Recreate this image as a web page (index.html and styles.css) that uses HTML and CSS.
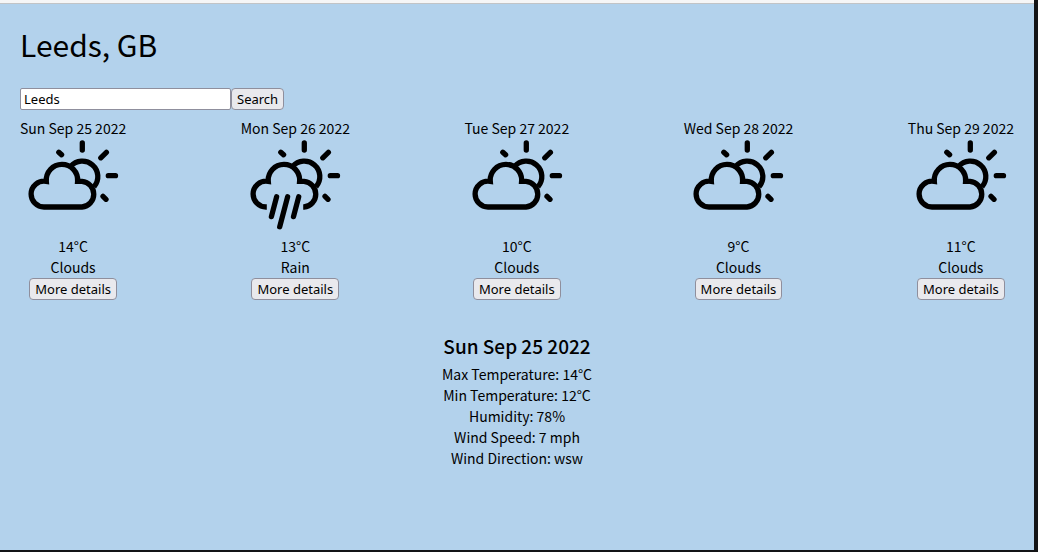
FILE: index.html
```html
<!DOCTYPE html>
<html lang="en">
<head>
<meta charset="utf-8">
<meta name="viewport" content="width=device-width, initial-scale=1">
<title>Weather forecast</title>
<link rel="stylesheet" href="styles.css">
</head>
<body>
<svg class="symbols" aria-hidden="true">
  <g id="sun">
    <path class="line" d="M42.6 25.4A15.5 15.5 0 0 1 66 45.8"/>
    <path class="line round" d="M54.3 1.9V9M72.8 16.8L78.4 11.4M80.3 34.7H87.5M75 55.4L78 58.3M30.8 11.2L33.6 13.8"/>
  </g>
  <symbol id="clouds" class="symbol" viewBox="0 0 90 90">
    <use href="#sun"/>
    <path class="line" d="M16 66H54A12.9 12.9 0 0 0 54 40.3H49.6A15.7 15.7 0 1 0 18.3 40.4A12.9 12.9 0 0 0 3.1 53.1A12.9 12.9 0 0 0 16 66Z"/>
  </symbol>
  <symbol id="rain" class="symbol" viewBox="0 0 90 90">
    <use href="#sun"/>
    <path class="line" d="M16.8 66H16A12.9 12.9 0 0 1 3.1 53.1A12.9 12.9 0 0 1 18.3 40.4A15.7 15.7 0 1 1 49.6 40.3H54A12.9 12.9 0 0 1 54 66H53.2"/>
    <path class="line round" d="M26.6 55.8L21.4 75.6M37.6 55.8L29.7 85.8M48.7 55.8L43.5 75.6"/>
  </symbol>
</svg>
<main class="page">
  <h1 class="city">Leeds, GB</h1>
  <form class="search">
    <input class="search-input" type="text" value="Leeds" aria-label="City">
    <button class="button" type="button">Search</button>
  </form>
  <section class="forecast">
    <article class="day">
      <div>Sun Sep 25 2022</div>
      <svg class="icon" role="img" aria-label="Clouds"><use href="#clouds"/></svg>
      <div>14°C</div>
      <div>Clouds</div>
      <button class="button" type="button">More details</button>
    </article>
    <article class="day">
      <div>Mon Sep 26 2022</div>
      <svg class="icon" role="img" aria-label="Rain"><use href="#rain"/></svg>
      <div>13°C</div>
      <div>Rain</div>
      <button class="button" type="button">More details</button>
    </article>
    <article class="day">
      <div>Tue Sep 27 2022</div>
      <svg class="icon" role="img" aria-label="Clouds"><use href="#clouds"/></svg>
      <div>10°C</div>
      <div>Clouds</div>
      <button class="button" type="button">More details</button>
    </article>
    <article class="day">
      <div>Wed Sep 28 2022</div>
      <svg class="icon" role="img" aria-label="Clouds"><use href="#clouds"/></svg>
      <div>9°C</div>
      <div>Clouds</div>
      <button class="button" type="button">More details</button>
    </article>
    <article class="day">
      <div>Thu Sep 29 2022</div>
      <svg class="icon" role="img" aria-label="Clouds"><use href="#clouds"/></svg>
      <div>11°C</div>
      <div>Clouds</div>
      <button class="button" type="button">More details</button>
    </article>
  </section>
  <section class="details">
    <h2 class="details-title">Sun Sep 25 2022</h2>
    <div>Max Temperature: 14°C</div>
    <div>Min Temperature: 12°C</div>
    <div>Humidity: 78%</div>
    <div>Wind Speed: 7 mph</div>
    <div>Wind Direction: wsw</div>
  </section>
</main>
</body>
</html>
```
FILE: styles.css
```css
* { box-sizing: border-box; }

html {
  padding: 0 4px 2px 0;
  background: #131416;
}

body {
  margin: 0;
  min-height: calc(100vh - 2px);
  display: flex;
  flex-direction: column;
  background: #b3d2ec;
  border-top: 3px solid #f6f6f6;
  color: #000;
  font-family: "Noto Sans CJK SC", "Noto Sans", sans-serif;
  font-size: 14px;
  line-height: 21px;
}

.symbols { position: absolute; width: 0; height: 0; }

.symbol { overflow: visible; }

.line {
  fill: none;
  stroke: #000;
  stroke-width: 5.3;
}

.round { stroke-linecap: round; }

.page {
  flex: 1;
  padding: 18px 20px 20px;
  border-top: 1px solid #c2c4c6;
}

.city {
  margin: 0 0 22px;
  font-size: 30px;
  font-weight: 400;
  line-height: 44px;
}

.search { display: flex; }

.search-input,
.button {
  height: 22px;
  border: 1px solid #8f8f9d;
  color: #000;
  font-family: "Noto Sans", sans-serif;
  font-size: 13px;
  line-height: 18px;
}

.search-input {
  width: 211px;
  padding: 0 3px;
  border-radius: 2px;
  background: #fff;
}

.button {
  padding: 0 5px;
  border-radius: 4px;
  background: #e9e9ed;
}

.forecast {
  display: flex;
  justify-content: space-between;
  margin-top: 8px;
}

.day {
  display: flex;
  flex-direction: column;
  align-items: center;
}

.icon {
  width: 90px;
  height: 90px;
  margin: 2px 0 5px;
  overflow: visible;
}

.details {
  margin-top: 32px;
  text-align: center;
}

.details-title {
  margin: 0 0 4px;
  font-size: 19px;
  font-weight: 500;
  line-height: 28px;
}
```
